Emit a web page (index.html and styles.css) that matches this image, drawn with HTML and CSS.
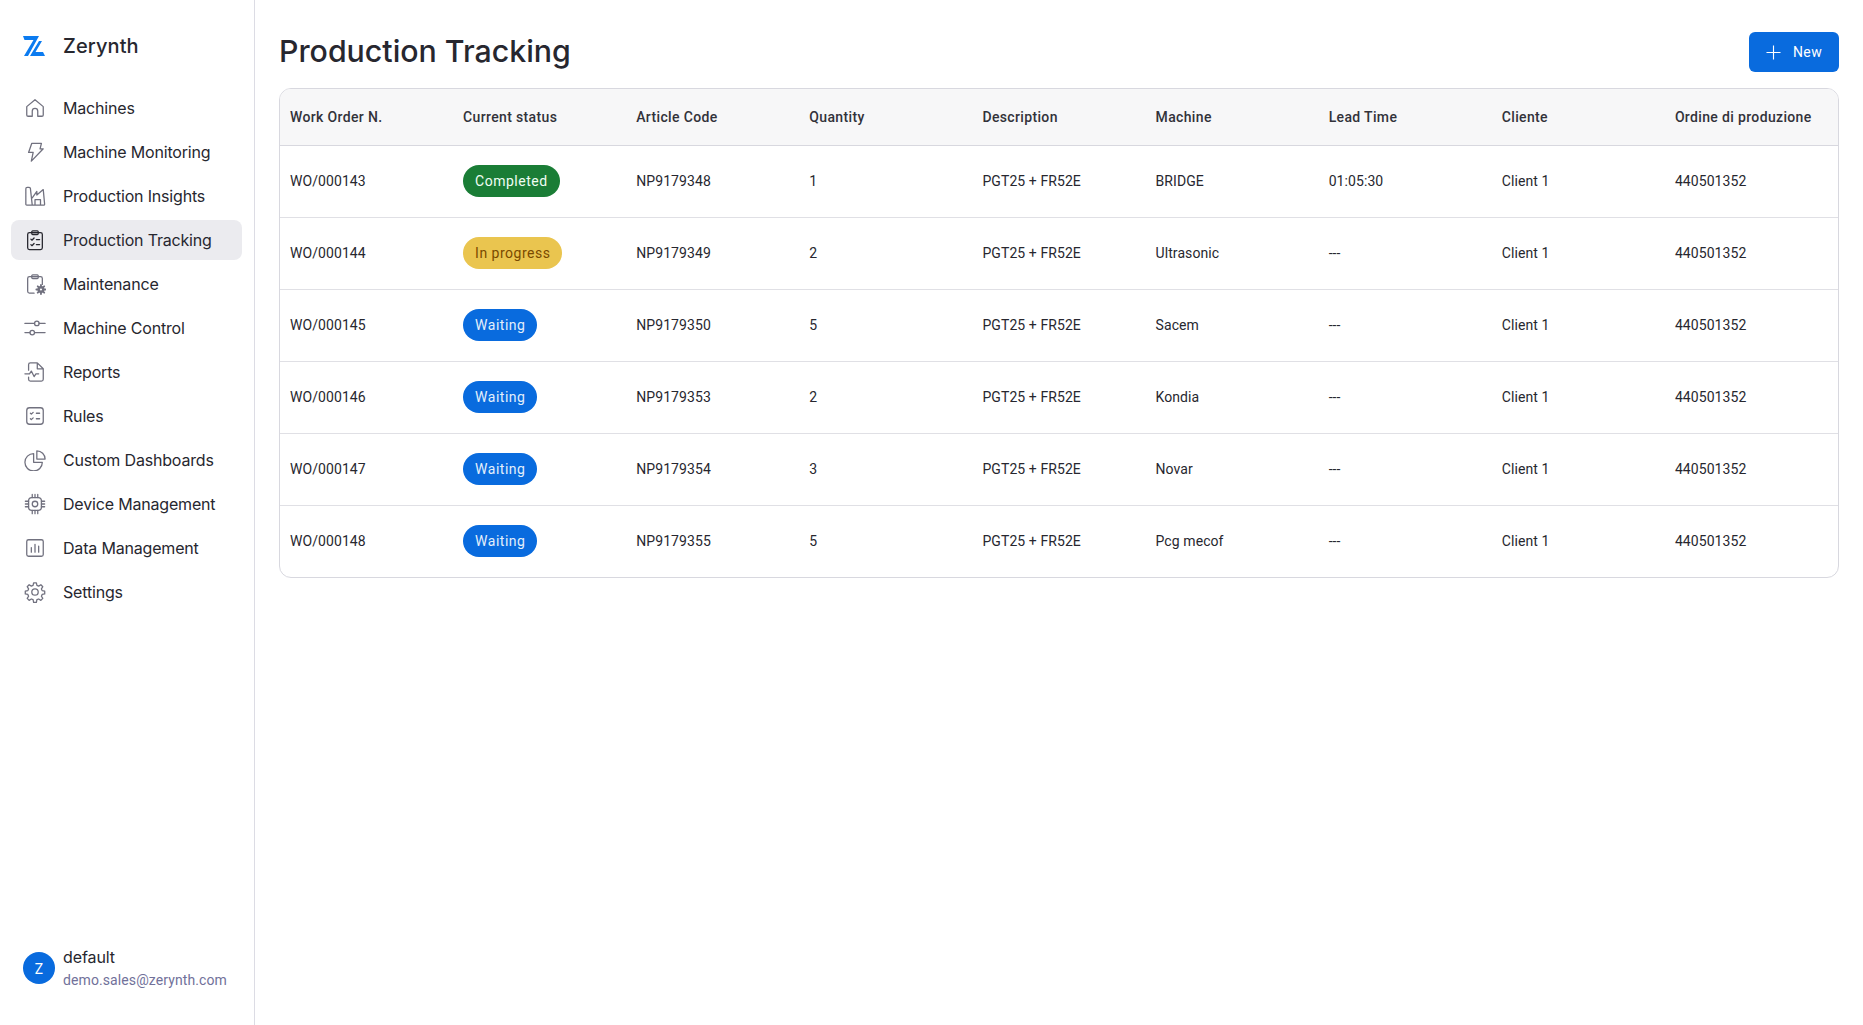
FILE: index.html
```html
<!DOCTYPE html>
<html lang="en">
<head>
<meta charset="utf-8">
<title>Production Tracking</title>
<link rel="stylesheet" href="styles.css">
</head>
<body>
<div class="app">
  <aside class="sidebar">
    <div class="brand">
      <svg class="logo" viewBox="0 0 22 20" width="22" height="20"><path d="M0 0H16L5 20H1L10.500 4H1.500z" fill="#0b7bf0"/><path d="M16 5H19L12.500 16H20L22 20H7z" fill="#0b7bf0"/></svg>
      <span class="brand-name">Zerynth</span>
    </div>
    <nav class="nav">
      <a class="nav-item"><svg class="ico" viewBox="0 0 24 24"><path d="M4.500 21H9v-5.500a3 3 0 0 1 6 0V21h4.500a1.500 1.500 0 0 0 1.500-1.500v-9L12 3l-9 7.500v9A1.500 1.500 0 0 0 4.500 21z"/></svg><span>Machines</span></a>
      <a class="nav-item"><svg class="ico" viewBox="0 0 24 24"><path d="M8.500 2.500h10.500l-1.500 6H21L8 22l2-9.500H5z"/></svg><span>Machine Monitoring</span></a>
      <a class="nav-item"><svg class="ico" viewBox="0 0 24 24"><path d="M2 4a1.500 1.500 0 0 1 1.500-1.500h2A1.500 1.500 0 0 1 7 4l2 18H3a1 1 0 0 1-1-1zM9 14l5-7v4l7-6 1.500 16a1 1 0 0 1-1 1H9M12 22v-6h6v6"/></svg><span>Production Insights</span></a>
      <a class="nav-item active"><svg class="ico" viewBox="0 0 24 24"><rect x="4" y="4" width="16" height="18.500" rx="2"/><rect x="8.500" y="2" width="7" height="4" rx="1"/><path d="M7.500 11l1.200 1.200 2.300-2.400M7.500 17l1.200 1.200 2.300-2.400M13.500 11.500H17M13.500 17H17"/></svg><span>Production Tracking</span></a>
      <a class="nav-item"><svg class="ico" viewBox="0 0 24 24"><path d="M11 22H6a2 2 0 0 1-2-2V6a2 2 0 0 1 2-2h12a2 2 0 0 1 2 2v6.500"/><rect x="8.500" y="2" width="7" height="4" rx="1"/><circle cx="18.500" cy="18" r="2.500" stroke-width="2.600"/><path d="M18.500 13v2M18.500 21v2M13.500 18h2M21.500 18h2M15 14.500l1.500 1.500M20.500 20l1.500 1.500M22 14.500L20.500 16M16.500 20L15 21.500" stroke-width="2"/></svg><span>Maintenance</span></a>
      <a class="nav-item"><svg class="ico" viewBox="0 0 24 24"><circle cx="14" cy="7" r="2.500"/><circle cx="9" cy="17" r="2.500"/><path d="M1 7h10.500M16.500 7H23M1 17h5.500M11.500 17H23"/></svg><span>Machine Control</span></a>
      <a class="nav-item"><svg class="ico" viewBox="0 0 24 24"><path d="M5 10V4a2 2 0 0 1 2-2h7.500L21 8.500V20a2 2 0 0 1-2 2H7a2 2 0 0 1-2-2v-2.500M14.500 2v6.500H21M1 14h5l2-3 3 6 2-3h3"/></svg><span>Reports</span></a>
      <a class="nav-item"><svg class="ico" viewBox="0 0 24 24"><rect x="3" y="3" width="18" height="18" rx="3"/><path d="M7 9l1 1 2-2M7 15l1 1 2-2M13.500 9H17M13.500 15H17"/></svg><span>Rules</span></a>
      <a class="nav-item"><svg class="ico" viewBox="0 0 24 24"><path d="M10.500 5a9.500 9.500 0 1 0 9.500 9.500h-9.500z"/><path d="M14 2a9 9 0 0 1 9 9h-9z"/></svg><span>Custom Dashboards</span></a>
      <a class="nav-item"><svg class="ico" viewBox="0 0 24 24"><rect x="5" y="5" width="14" height="14" rx="3.500"/><circle cx="12" cy="12" r="3"/><path d="M9 1.500V5M12 1.500V5M15 1.500V5M9 19v3.500M12 19v3.500M15 19v3.500M1.500 9H5M1.500 12H5M1.500 15H5M19 9h3.500M19 12h3.500M19 15h3.500"/></svg><span>Device Management</span></a>
      <a class="nav-item"><svg class="ico" viewBox="0 0 24 24"><rect x="3" y="3" width="18" height="18" rx="2"/><path d="M8 16.500v-5M12 16.500V8M16 16.500V10"/></svg><span>Data Management</span></a>
      <a class="nav-item"><svg class="ico" viewBox="0 0 24 24"><circle cx="12" cy="12" r="3.500"/><path d="M10.500 2h3l.6 2.800 1.900.8 2.400-1.500 2.100 2.100-1.500 2.400.8 1.900 2.800.6v3l-2.800.6-.8 1.900 1.500 2.400-2.100 2.100-2.400-1.500-1.900.8-.6 2.800h-3l-.6-2.800-1.900-.8-2.400 1.500-2.100-2.100 1.500-2.400-.8-1.900-2.800-.6v-3l2.800-.6.8-1.900-1.500-2.400 2.100-2.100 2.400 1.500 1.900-.8z"/></svg><span>Settings</span></a>
    </nav>
    <div class="user">
      <div class="avatar">Z</div>
      <div class="user-text">
        <div class="user-name">default</div>
        <div class="user-mail">demo.sales@zerynth.com</div>
      </div>
    </div>
  </aside>
  <main class="main">
    <header class="top">
      <h1 class="title">Production Tracking</h1>
      <button class="new-btn"><svg class="plus" viewBox="0 0 16 16"><path d="M8 .5v15M.5 8h15"/></svg>New</button>
    </header>
    <div class="table-wrap">
      <table class="table">
        <thead>
          <tr><th>Work Order N.</th><th>Current status</th><th>Article Code</th><th>Quantity</th><th>Description</th><th>Machine</th><th>Lead Time</th><th>Cliente</th><th>Ordine di produzione</th></tr>
        </thead>
        <tbody>
          <tr><td>WO/000143</td><td><span class="badge green">Completed</span></td><td>NP9179348</td><td>1</td><td>PGT25 + FR52E</td><td>BRIDGE</td><td>01:05:30</td><td>Client 1</td><td>440501352</td></tr>
          <tr><td>WO/000144</td><td><span class="badge yellow">In progress</span></td><td>NP9179349</td><td>2</td><td>PGT25 + FR52E</td><td>Ultrasonic</td><td>---</td><td>Client 1</td><td>440501352</td></tr>
          <tr><td>WO/000145</td><td><span class="badge blue">Waiting</span></td><td>NP9179350</td><td>5</td><td>PGT25 + FR52E</td><td>Sacem</td><td>---</td><td>Client 1</td><td>440501352</td></tr>
          <tr><td>WO/000146</td><td><span class="badge blue">Waiting</span></td><td>NP9179353</td><td>2</td><td>PGT25 + FR52E</td><td>Kondia</td><td>---</td><td>Client 1</td><td>440501352</td></tr>
          <tr><td>WO/000147</td><td><span class="badge blue">Waiting</span></td><td>NP9179354</td><td>3</td><td>PGT25 + FR52E</td><td>Novar</td><td>---</td><td>Client 1</td><td>440501352</td></tr>
          <tr><td>WO/000148</td><td><span class="badge blue">Waiting</span></td><td>NP9179355</td><td>5</td><td>PGT25 + FR52E</td><td>Pcg mecof</td><td>---</td><td>Client 1</td><td>440501352</td></tr>
        </tbody>
      </table>
    </div>
  </main>
</div>
</body>
</html>
```
FILE: styles.css
```css
* { box-sizing: border-box; }
html, body { margin: 0; height: 100%; }
body { font-family: Inter, Roboto, "Liberation Sans", sans-serif; color: #27272f; background: #fff; }
.app { display: flex; height: 1025px; overflow: hidden; }
.sidebar { width: 255px; flex: none; border-right: 1px solid #dcdce4; display: flex; flex-direction: column; padding: 0 11px; }
.brand { display: flex; align-items: center; height: 46px; margin-top: 23px; padding-left: 12px; gap: 18px; }
.logo { flex: none; }
.brand-name { font-size: 20px; font-weight: 500; letter-spacing: .1px; }
.nav { display: flex; flex-direction: column; gap: 4px; margin-top: 19px; }
.nav-item { display: flex; align-items: center; height: 40px; border-radius: 8px; padding-left: 13px; gap: 17px; font-size: 16px; letter-spacing: -.18px; color: #27272f; }
.nav-item.active { background: #ebebef; margin-right: 1px; }
.ico { width: 22px; height: 22px; flex: none; fill: none; stroke: #71717f; stroke-width: 1.4; stroke-linecap: round; stroke-linejoin: round; }
.active .ico { stroke: #27272f; }
.user { margin-top: auto; display: flex; align-items: flex-start; gap: 8px; padding: 0 12px; margin-bottom: 33px; }
.avatar { width: 32px; height: 32px; margin-top: 6px; border-radius: 50%; background: #096bde; color: #fff; font-size: 14px; display: flex; align-items: center; justify-content: center; flex: none; }
.user-name { font-size: 16px; line-height: 23px; letter-spacing: -.1px; }
.user-mail { font-family: Roboto, sans-serif; font-size: 14px; line-height: 23px; letter-spacing: .1px; color: #71719a; }
.main { flex: 1; padding: 32px 24px 0 24px; min-width: 0; }
.top { display: flex; justify-content: space-between; align-items: center; height: 40px; margin-bottom: 16px; }
.title { margin: -2px 0 0 0; font-size: 30.300px; font-weight: 500; }
.new-btn { height: 40px; width: 90px; border: 0; border-radius: 6px; background: #096bde; color: #fff; font: 400 14px Roboto, sans-serif; letter-spacing: .4px; display: flex; align-items: center; justify-content: center; gap: 12px; }
.plus { width: 15px; height: 15px; fill: none; stroke: #fff; stroke-width: 1.2; }
.table-wrap { border: 1px solid #d8d8df; border-radius: 12px; overflow: hidden; }
.table { width: 100%; border-collapse: collapse; table-layout: fixed; font-family: Roboto, sans-serif; font-size: 14px; letter-spacing: .08px; }
.table th { height: 56px; background: #f7f7f8; font-weight: 500; text-align: left; padding: 0 10px; border-bottom: 1px solid #d8d8df; color: #32323a; letter-spacing: .35px; }
.table td { height: 72px; padding: 0 10px 1px; border-bottom: 1px solid #e0e0e5; }
.table tbody tr:last-child td { border-bottom: 0; }
.badge { display: inline-flex; align-items: center; height: 32px; padding: 0 12px; border-radius: 16px; font-size: 14px; font-weight: 400; letter-spacing: .5px; }
.green { background: #1a7d36; color: #f0fdf4; }
.yellow { background: #eac54f; color: #7a4a00; }
.blue { background: #096bde; color: #e3effb; }
```
